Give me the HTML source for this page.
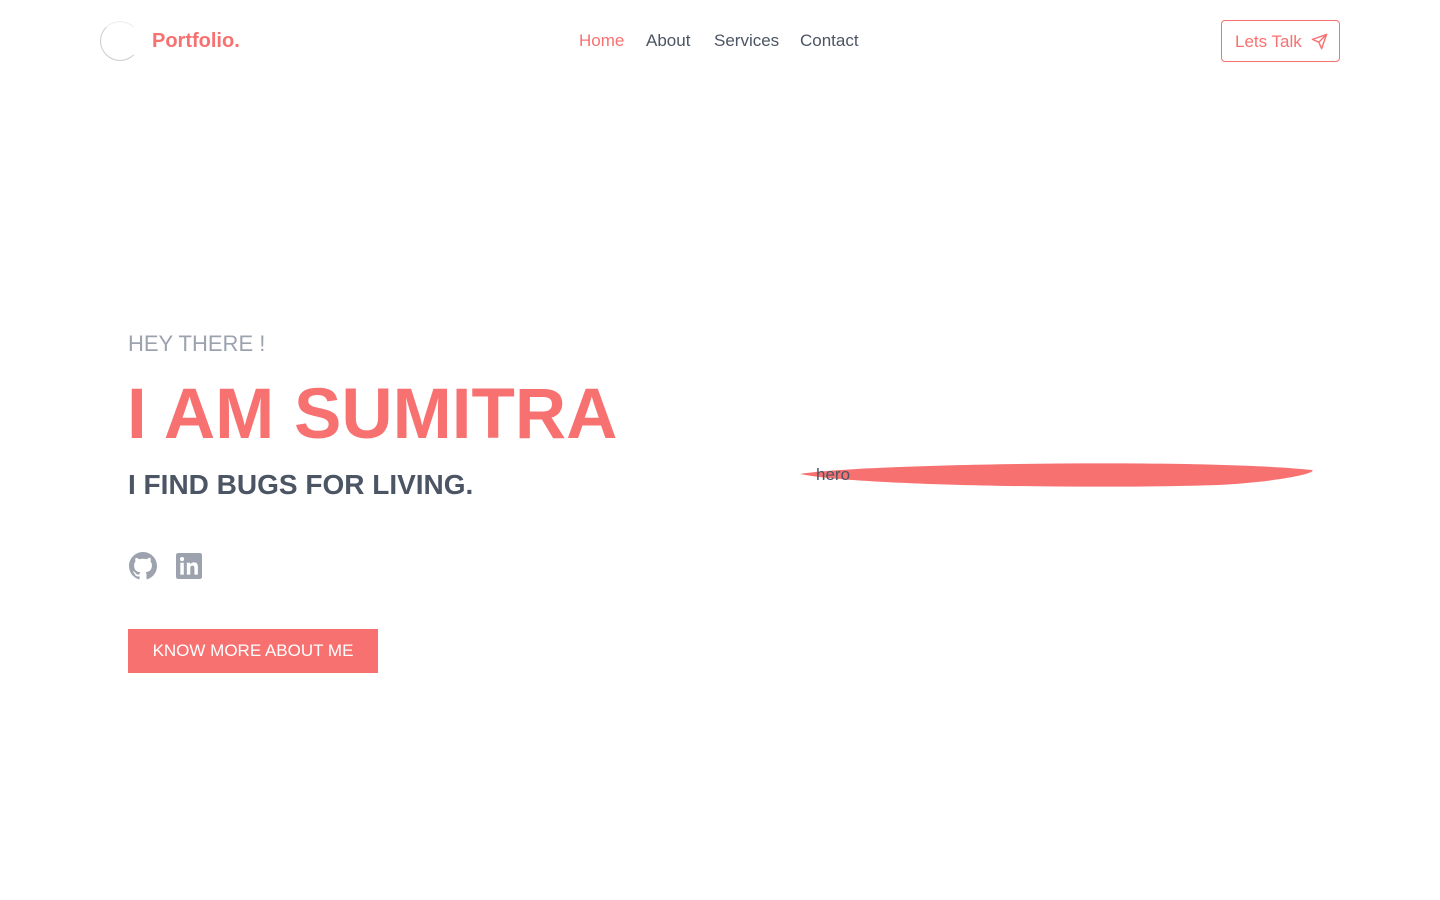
<!DOCTYPE html>
<html><head><meta charset="utf-8"><style>
*{margin:0;padding:0;box-sizing:border-box}
body{width:1440px;height:900px;background:#fff;font-family:"Liberation Sans",sans-serif;position:relative;overflow:hidden}
.abs{position:absolute;white-space:nowrap}
.n{position:absolute;top:31px;color:#4b5563;font-size:17px}
</style></head><body>
<div class="abs" style="left:100px;top:21px;width:40px;height:40px;border-radius:50%;border:1px solid #ccc;border-top-color:#eee;border-right-color:#fff"></div>
<div class="abs" style="left:152px;top:30px;font-size:20px;font-weight:bold;color:#f87171">Portfolio.</div>
<div class="n" style="left:579px;color:#f87171">Home</div>
<div class="n" style="left:646px">About</div>
<div class="n" style="left:714px">Services</div>
<div class="n" style="left:800px">Contact</div>
<div class="abs" style="left:1221px;top:20px;width:119px;height:42px;border:1px solid #f87171;border-radius:4px;color:#f87171;font-size:17px;padding:11px 0 0 13px">Lets Talk
<svg style="position:absolute;left:89px;top:12px" width="17" height="17" viewBox="0 0 24 24" fill="none" stroke="#f87171" stroke-width="2" stroke-linejoin="round"><path d="M22 2L11 13M22 2l-7 20-4-9-9-4 20-7z"/></svg></div>
<div class="abs" style="left:128px;top:331px;font-size:22px;color:#9ca3af">HEY THERE !</div>
<div class="abs" style="left:127px;top:374px;font-size:71px;font-weight:bold;color:#f87171">I AM SUMITRA</div>
<div class="abs" style="left:128px;top:469px;font-size:28px;font-weight:bold;color:#4b5563">I FIND BUGS FOR LIVING.</div>
<svg class="abs" style="left:129px;top:552px" width="28" height="28" viewBox="0 0 16 16" fill="#9ca3af"><path d="M8 0C3.58 0 0 3.58 0 8c0 3.54 2.29 6.53 5.47 7.59.4.07.55-.17.55-.38v-1.33c-2.23.48-2.7-1.07-2.7-1.07-.36-.93-.89-1.17-.89-1.17-.73-.5.06-.49.06-.49.8.06 1.23.82 1.23.82.72 1.22 1.87.87 2.33.66.07-.52.28-.87.5-1.07-1.78-.2-3.64-.89-3.64-3.95 0-.87.31-1.59.82-2.15-.08-.2-.36-1.02.08-2.12 0 0 .67-.21 2.2.82A7.6 7.6 0 018 3.86c.68 0 1.36.09 2 .27 1.53-1.04 2.2-.82 2.2-.82.44 1.1.16 1.92.08 2.12.51.56.82 1.27.82 2.15 0 3.07-1.87 3.75-3.65 3.95.29.25.54.73.54 1.48v2.2c0 .21.15.46.55.38A8 8 0 0016 8c0-4.42-3.58-8-8-8z"/></svg>
<svg class="abs" style="left:176px;top:553px" width="26" height="26" viewBox="0 0 24 24"><rect width="24" height="24" rx="2" fill="#9ca3af"/><rect x="4" y="9" width="3.2" height="11" fill="#fff"/><circle cx="5.6" cy="5.6" r="1.9" fill="#fff"/><path d="M10 9h3v1.6c.6-1 1.8-1.9 3.6-1.9 3.2 0 3.6 2.1 3.6 4.7V20H17v-5.6c0-1.4 0-2.8-1.8-2.8s-2 1.3-2 2.7V20H10z" fill="#fff"/></svg>
<div class="abs" style="left:128px;top:629px;width:250px;height:44px;background:#f87171;color:#fff;font-size:17px;text-align:center;line-height:44px">KNOW MORE ABOUT ME</div>
<svg class="abs" style="left:798px;top:460px" width="520" height="30"><path d="M2 14 C60 4 400 -2 514 10 C520 13 480 22 420 25 C300 29 60 26 2 14Z" fill="#f87171"/></svg>
<div class="abs" style="left:816px;top:465px;font-size:17px;color:#4b5563">hero</div>
</body></html>
